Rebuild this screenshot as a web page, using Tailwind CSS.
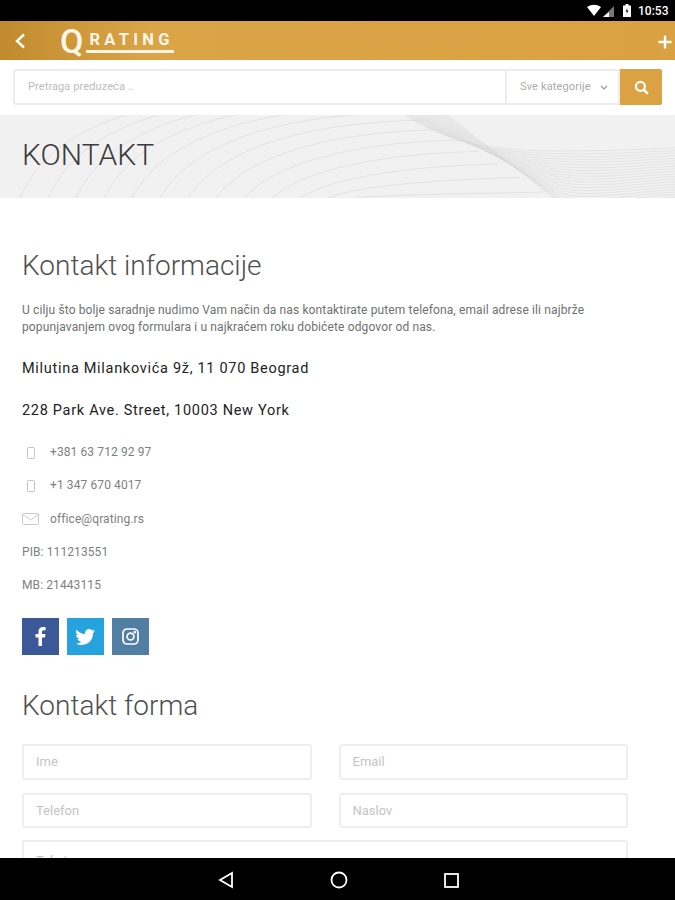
<!DOCTYPE html>
<html>
<head>
  <meta charset="UTF-8">
  <title>Kontakt</title>
  <script src="https://cdn.jsdelivr.net/npm/@tailwindcss/browser@4"></script>
</head>
<body class="bg-white">
  <div class="w-[675px] h-[900px] overflow-hidden flex flex-col font-['Roboto',sans-serif]">

    <!-- status bar -->
    <div class="h-[21px] shrink-0 bg-black flex items-center justify-end pr-[7px] text-white">
      <svg width="30" height="14" viewBox="0 0 30 14">
        <path d="M1 3 Q8 -1.500 15 3 L8 12 Z" fill="#fff"/>
        <path d="M28 2 V13 H17 Z" fill="#777"/>
        <path d="M23 8 V13 H17 Z" fill="#fff"/>
      </svg>
      <svg width="10" height="13" viewBox="0 0 9 13" class="ml-[6px] mr-[6px]">
        <path d="M3 0 H6 V1.500 H8.500 V13 H0.500 V1.500 H3 Z" fill="#fff"/>
        <path d="M5 4 L3 7.500 H4.500 L4 10 L6 6.500 H4.500 Z" fill="#000"/>
      </svg>
      <span class="text-[12px] font-medium leading-none w-[30px]">10:53</span>
    </div>

    <!-- app bar -->
    <div class="h-[39px] shrink-0 flex items-center bg-[linear-gradient(90deg,#c18a2e_0%,#dba446_22%,#d9a142_100%)] text-white">
      <svg width="12" height="16" viewBox="0 0 12 16" class="ml-[14px]">
        <path d="M10 1.500 L3 8 L10 14.500" fill="none" stroke="#fff" stroke-width="2.400"/>
      </svg>
      <div class="ml-[34px] flex items-center h-[28px]">
        <span class="text-[34px] font-medium leading-[28px] text-[#fdf6e8]">Q</span>
        <span class="w-[88px] ml-[3px] mt-[2px] border-b-[3px] border-[#fdf6e8] pl-[3px] text-[16.500px] font-bold tracking-[4.300px] leading-[20px] h-[23px] overflow-hidden whitespace-nowrap text-[#fdf6e8]">RATING</span>
      </div>
      <svg width="14" height="14" viewBox="0 0 14 14" class="ml-auto mr-[3px] mt-[2px]">
        <path d="M7 0.500 V13.500 M0.500 7 H13.500" stroke="#fff" stroke-width="2.400"/>
      </svg>
    </div>

    <!-- search -->
    <div class="h-[55px] shrink-0 pl-[13px] pr-[13px] pt-[9px]">
      <div class="h-[36px] flex">
        <div class="flex-1 flex items-center border-2 border-r-0 border-[#ececee] rounded-l-[3px] pl-[13px] text-[11px] tracking-[0.100px] text-[#bcbcbc]">Pretraga preduzeća ..</div>
        <div class="w-[115px] flex items-center border-2 border-[#ececee] pl-[13px] text-[11px] tracking-[0.150px] text-[#ababab]">
          Sve kategorije
          <svg width="8" height="5" viewBox="0 0 8 5" class="ml-[9px]"><path d="M1 1 L4 4 L7 1" fill="none" stroke="#999" stroke-width="1.200"/></svg>
        </div>
        <div class="w-[42px] flex items-center justify-center bg-[#dba244] rounded-r-[2px]">
          <svg width="15" height="15" viewBox="0 0 14 14">
            <circle cx="6" cy="6" r="4.200" fill="none" stroke="#fff" stroke-width="2"/>
            <path d="M9 9 L13 13" stroke="#fff" stroke-width="2.400"/>
          </svg>
        </div>
      </div>
    </div>

    <!-- banner -->
    <div class="relative h-[83px] shrink-0 bg-[#f1f1f1] overflow-hidden flex items-center pl-[22px]">
      <svg id="waves" class="absolute inset-0" width="675" height="83" viewBox="0 0 675 83" fill="none"></svg>
      <h1 class="relative text-[30px] font-light text-[#3c3c3c] leading-none mt-[-3px]">KONTAKT</h1>
    </div>

    <!-- content -->
    <div class="flex-1 min-h-0 overflow-hidden px-[22px]">
      <h2 class="mt-[50px] text-[28px] font-light text-[#505050] leading-[36px]">Kontakt informacije</h2>
      <p class="mt-[18px] text-[12px] leading-[17px] text-[#707070] tracking-[0.130px]">U cilju što bolje saradnje nudimo Vam način da nas kontaktirate putem telefona, email adrese ili najbrže<br>popunjavanjem ovog formulara i u najkraćem roku dobićete odgovor od nas.</p>
      <p class="mt-[23px] text-[14.500px] leading-[20px] text-[#222] tracking-[0.700px]">Milutina Milankovića 9ž, 11 070 Beograd</p>
      <p class="mt-[22px] text-[14.500px] leading-[20px] text-[#222] tracking-[0.700px]">228 Park Ave. Street, 10003 New York</p>

      <div class="mt-[23px] flex flex-col gap-[16.250px] text-[12px] leading-[17px] text-[#808080] tracking-[0.100px]">
        <div class="flex items-center">
          <span class="w-[28px] pl-[5px]"><svg width="8" height="12" viewBox="0 0 8 12"><rect x="0.500" y="0.500" width="7" height="11" rx="1" fill="none" stroke="#c4c4c4"/></svg></span>
          <span>+381 63 712 92 97</span>
        </div>
        <div class="flex items-center">
          <span class="w-[28px] pl-[5px]"><svg width="8" height="12" viewBox="0 0 8 12"><rect x="0.500" y="0.500" width="7" height="11" rx="1" fill="none" stroke="#c4c4c4"/></svg></span>
          <span>+1 347 670 4017</span>
        </div>
        <div class="flex items-center">
          <span class="w-[28px]"><svg width="17" height="12" viewBox="0 0 17 12"><rect x="0.500" y="0.500" width="16" height="11" rx="1" fill="none" stroke="#c8c8c8"/><path d="M1 1.500 L8.500 7 L16 1.500" fill="none" stroke="#c8c8c8"/></svg></span>
          <span>office@qrating.rs</span>
        </div>
        <div>PIB: 111213551</div>
        <div>MB: 21443115</div>
      </div>

      <div class="mt-[24px] flex gap-[8px]">
        <div class="w-[37px] h-[37px] flex items-center justify-center bg-[#3b5998]">
          <svg width="11" height="19" viewBox="0 0 11 19"><path d="M7 19 V10.500 H10 L10.500 7 H7 V5 C7 4 7.500 3.300 8.800 3.300 H10.600 V0.200 C10 0.100 9 0 8 0 C5.300 0 3.500 1.600 3.500 4.500 V7 H0.500 V10.500 H3.500 V19 Z" fill="#fff"/></svg>
        </div>
        <div class="w-[37px] h-[37px] flex items-center justify-center bg-[#26a3de]">
          <svg width="19" height="16" viewBox="0 0 24 20"><path d="M24 2.400 C23.100 2.800 22.200 3.100 21.200 3.200 C22.200 2.600 23 1.600 23.400 0.500 C22.400 1.100 21.300 1.500 20.300 1.700 C19.300 0.700 18 0 16.500 0 C13.600 0 11.300 2.300 11.300 5.100 C11.300 5.500 11.300 5.900 11.400 6.300 C7.100 6.100 3.300 4 0.800 0.900 C0.400 1.700 0.100 2.600 0.100 3.500 C0.100 5.300 1 6.900 2.400 7.800 C1.600 7.800 0.800 7.600 0.100 7.200 V7.300 C0.100 9.800 1.900 11.900 4.200 12.300 C3.400 12.500 2.500 12.600 1.900 12.400 C2.500 14.400 4.500 15.900 6.800 15.900 C5 17.300 2.700 18.100 0.300 18.100 C0.200 18.100 0.100 18.100 0 18.100 C2.300 19.500 5 20 7.500 20 C16.600 20 21.500 12.500 21.500 6 V5.300 C22.500 4.600 23.300 3.600 24 2.400 Z" fill="#fff"/></svg>
        </div>
        <div class="w-[37px] h-[37px] flex items-center justify-center bg-[#517fa4]">
          <svg width="17" height="17" viewBox="0 0 17 17" fill="none" stroke="#fff" stroke-width="1.700"><rect x="1" y="1" width="15" height="15" rx="4"/><circle cx="8.500" cy="8.500" r="3.400"/><circle cx="12.800" cy="4.200" r="0.500" fill="#fff"/></svg>
        </div>
      </div>

      <h2 class="mt-[33px] text-[28px] font-light text-[#505050] leading-[36px]">Kontakt forma</h2>

      <div class="mt-[20px] w-[606px] grid grid-cols-2 gap-x-[27px]">
        <div class="h-[36px] flex items-center border-2 border-[#eeeeee] rounded-[3px] pl-[12px] text-[13px] text-[#c4c4c4]">Ime</div>
        <div class="h-[36px] flex items-center border-2 border-[#eeeeee] rounded-[3px] pl-[12px] text-[13px] text-[#c4c4c4]">Email</div>
        <div class="mt-[13px] h-[35px] flex items-center border-2 border-[#eeeeee] rounded-[3px] pl-[12px] text-[13px] text-[#c4c4c4]">Telefon</div>
        <div class="mt-[13px] h-[35px] flex items-center border-2 border-[#eeeeee] rounded-[3px] pl-[12px] text-[13px] text-[#c4c4c4]">Naslov</div>
        <div class="col-span-2 mt-[12px] h-[80px] border-2 border-[#eeeeee] rounded-[3px] pl-[12px] pt-[9px] text-[13px] text-[#c4c4c4]">Tekst</div>
      </div>
    </div>

    <!-- nav bar -->
    <div class="h-[42px] shrink-0 bg-black flex items-center justify-center gap-[96px] pl-[2px] pt-[2px] relative z-10">
      <svg width="16" height="18" viewBox="0 0 16 18"><path d="M14 2 L2 9 L14 16 Z" fill="none" stroke="#fff" stroke-width="1.800"/></svg>
      <svg width="18" height="18" viewBox="0 0 18 18"><circle cx="9" cy="9" r="7.500" fill="none" stroke="#fff" stroke-width="1.800"/></svg>
      <svg width="15" height="15" viewBox="0 0 15 15"><rect x="1" y="1" width="13" height="13" fill="none" stroke="#fff" stroke-width="1.800"/></svg>
    </div>
  </div>

  <script>
    // wave lines behind the page title
    const svg = document.getElementById('waves');
    let paths = '';
    for (let j = -6; j <= 8; j++) {
      const x0 = 20 + 28 * (j + 6);
      const yEnd = 5 + 9 * j + 0.5 * j * j;
      const xEnd = 420 + Math.max(yEnd, 0) * 1.6;
      const c1y = 83 - 0.6 * (83 - yEnd);
      const c2x = Math.min(x0 + 110, xEnd - 20);
      paths += `<path d="M${x0} 83 C${x0 + 30} ${c1y} ${c2x} ${yEnd + 2} ${xEnd} ${yEnd}" stroke="#dedede" stroke-width="0.800"/>`;
    }
    for (let i = 0; i < 22; i++) {
      const x0 = 405 + i * 2;
      const y2 = 36 + i * 2.6;
      paths += `<path d="M${x0} 0 C${450 + i * 1.5} 28 ${490 + i * 3} ${36 + i * 2} 560 ${y2} S640 ${y2 - 2} 675 ${y2 - 3}" stroke="#dadada" stroke-width="0.600"/>`;
    }
    svg.innerHTML = paths;
  </script>
</body>
</html>
